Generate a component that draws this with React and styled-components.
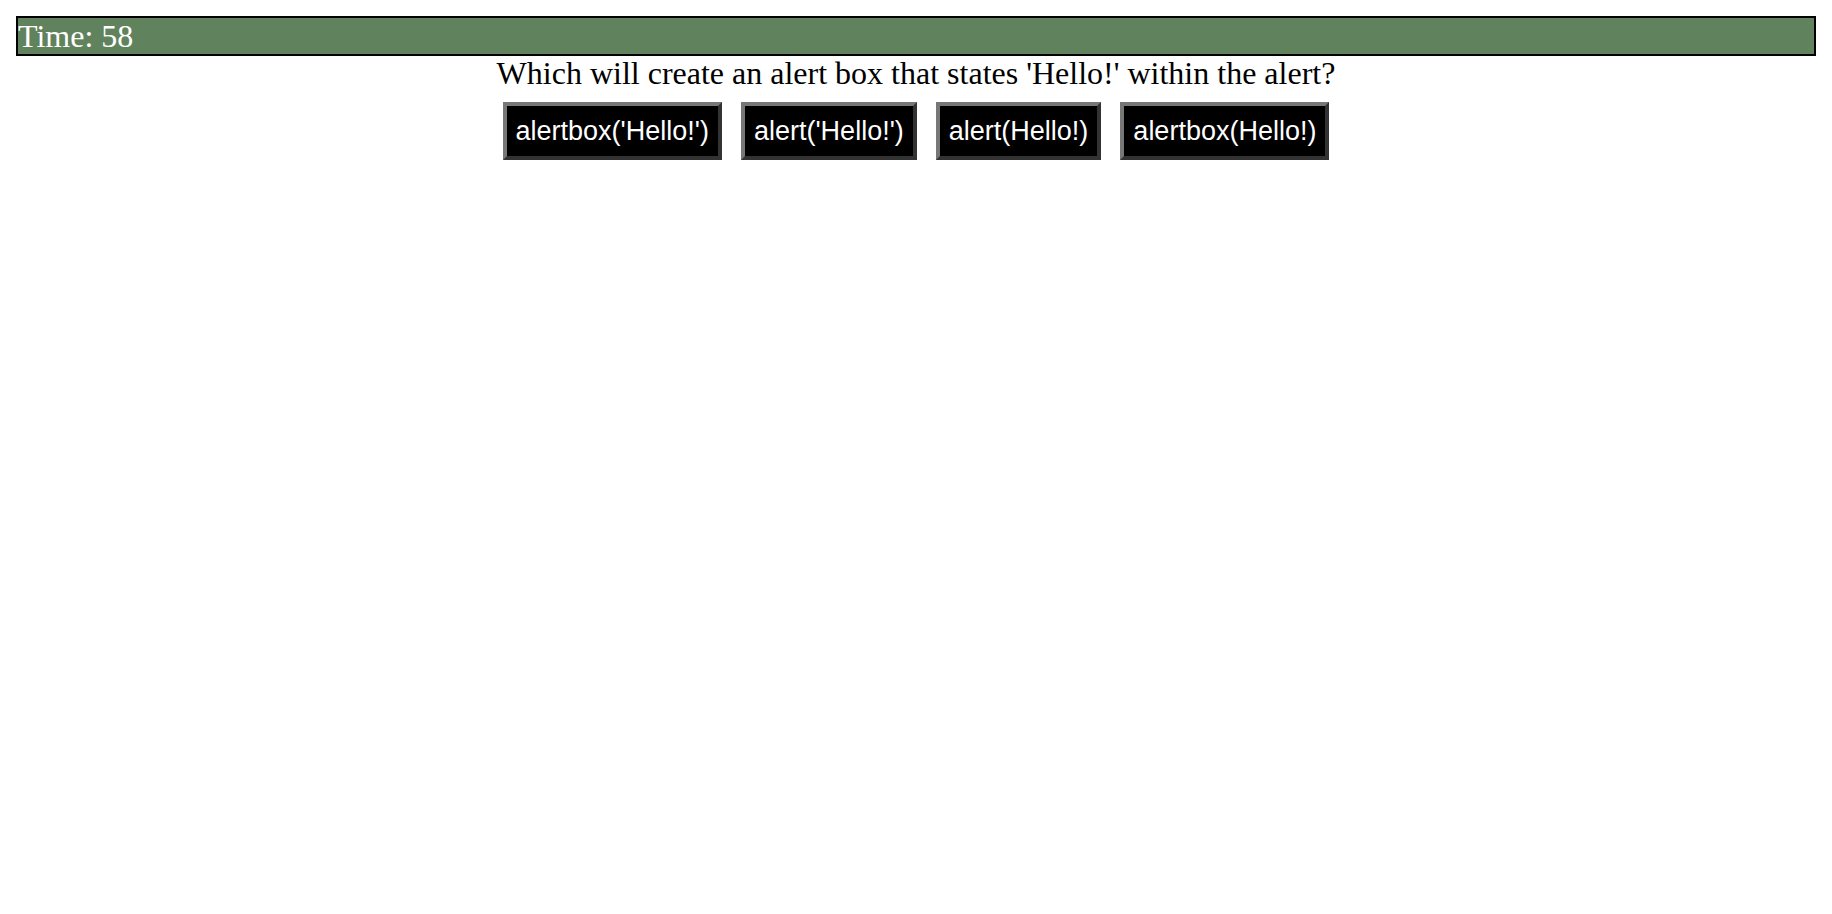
import React from 'react'
import styled, { createGlobalStyle } from 'styled-components'

const GlobalStyle = createGlobalStyle`
  body {
    margin: 8px;
    background: #fff;
    font-family: "Liberation Serif", "Times New Roman", serif;
  }
`

const Page = styled.div`
  padding: 8px;
  display: flex;
  flex-direction: column;
`

const TimerBar = styled.div`
  border: 2px solid #000;
  background-color: #60825c;
  color: #fff;
  font-size: 32px;
  line-height: 36px;
  padding: 0;
`

const Question = styled.p`
  margin: 1px 0 0;
  text-align: center;
  font-size: 32px;
  line-height: 32px;
  color: #000;
`

const Choices = styled.div`
  display: flex;
  justify-content: center;
  gap: 19px;
  margin-top: 13px;
`

const Choice = styled.button`
  font-family: "Liberation Sans", Arial, sans-serif;
  font-size: 27px;
  line-height: 30px;
  padding: 10px 9px;
  background: #000;
  color: #fff;
  border: 4px solid;
  border-color: #777 #333 #333 #777;
  cursor: pointer;
`

const answers = [
  "alertbox('Hello!')",
  "alert('Hello!')",
  "alert(Hello!)",
  "alertbox(Hello!)",
]

export default function App() {
  return (
    <>
      <GlobalStyle />
      <Page>
        <TimerBar>Time: 58</TimerBar>
        <Question>Which will create an alert box that states 'Hello!' within the alert?</Question>
        <Choices>
          {answers.map(a => (
            <Choice key={a}>{a}</Choice>
          ))}
        </Choices>
      </Page>
    </>
  )
}
